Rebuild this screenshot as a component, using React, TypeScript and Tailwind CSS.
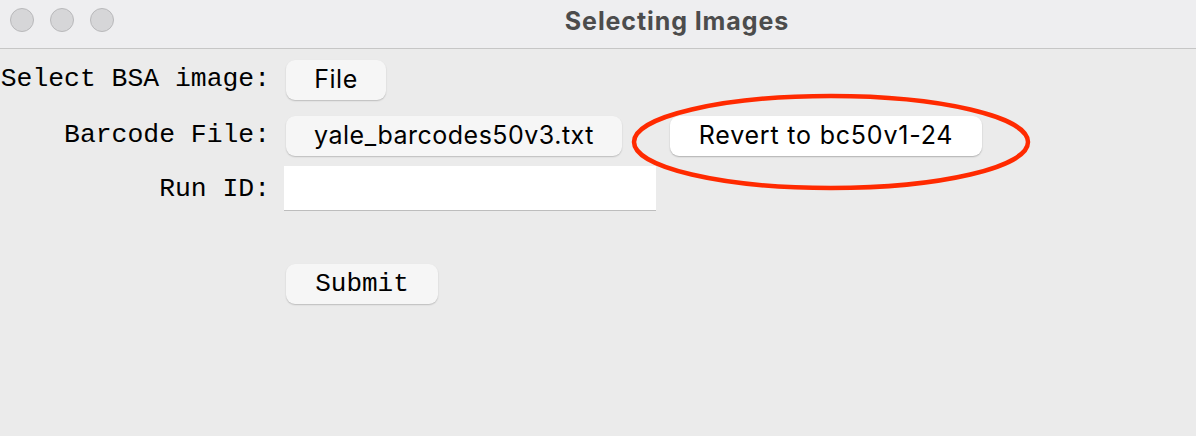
import React from "react";

const mono = "font-['Liberation_Mono','Courier_New',monospace]";
const sans = "font-['Inter','Liberation_Sans',sans-serif]";

function Light() {
  return (
    <div className="w-[24px] h-[24px] rounded-full bg-[#d6d6d8] border border-[#b9b9bb]" />
  );
}

function Label({ children, className }: { children: React.ReactNode; className?: string }) {
  return (
    <div className={"w-[270px] shrink-0 flex justify-end whitespace-nowrap text-[26.4px] text-black " + mono + " " + (className ?? "")}>
      {children}
    </div>
  );
}

function GrayButton({ children, className }: { children: React.ReactNode; className?: string }) {
  return (
    <button
      className={
        "h-[40px] shrink-0 whitespace-nowrap rounded-[9px] bg-[#f6f6f6] shadow-[0_1px_1.5px_rgba(0,0,0,0.2)] text-black " +
        (className ?? "")
      }
    >
      {children}
    </button>
  );
}

export default function App() {
  return (
    <div className="w-[1196px] h-[436px] bg-[#ebebeb] flex flex-col overflow-hidden">
      {/* title bar */}
      <div className="relative h-[49px] bg-[#eeeef0] border-b border-[#c6c6c6] flex items-center">
        <div className="flex flex-row gap-[16px] pl-[10px] pb-[9px]">
          <Light />
          <Light />
          <Light />
        </div>
        <div
          className={
            "absolute left-0 right-0 top-[3px] text-center text-[25px] tracking-[0.9px] font-bold text-[#4c4c4c] " +
            sans
          }
        >
          <span className="ml-[158px]">Selecting Images</span>
        </div>
      </div>

      {/* form */}
      <div className="relative flex flex-col">
        <div className="flex flex-row items-center mt-[11px]">
          <Label>Select BSA image:</Label>
          <GrayButton className={"ml-[16px] w-[100px] text-[25px] tracking-[0.5px] " + sans}>File</GrayButton>
        </div>

        <div className="flex flex-row items-center mt-[16px]">
          <Label>Barcode File:</Label>
          <GrayButton className={"ml-[16px] w-[336px] text-[25px] tracking-[0.5px] " + sans}>
            yale_barcodes50v3.txt
          </GrayButton>
          <button
            className={
              "ml-[48px] h-[40px] w-[312px] shrink-0 whitespace-nowrap rounded-[9px] bg-white shadow-[0_1px_1.5px_rgba(0,0,0,0.25)] text-[25px] tracking-[0.8px] text-black " +
              sans
            }
          >
            Revert to bc50v1-24
          </button>
        </div>

        <div className="flex flex-row items-center mt-[10px]">
          <Label className="pt-[3px]">Run ID:</Label>
          <input
            className="ml-[14px] w-[372px] h-[45px] shrink-0 bg-white border-b border-[#bdbdbd] outline-none"
            type="text"
          />
        </div>

        <div className="flex flex-row mt-[53px]">
          <GrayButton className={"ml-[286px] w-[152px] text-[26px] " + mono}>Submit</GrayButton>
        </div>

        {/* annotation */}
        <svg
          className="absolute left-[630px] top-[43px] pointer-events-none"
          width="402"
          height="100"
          viewBox="0 0 402 100"
        >
          <ellipse cx="201" cy="50" rx="197" ry="46" fill="none" stroke="#ff2a00" strokeWidth="4.5" />
        </svg>
      </div>
    </div>
  );
}
